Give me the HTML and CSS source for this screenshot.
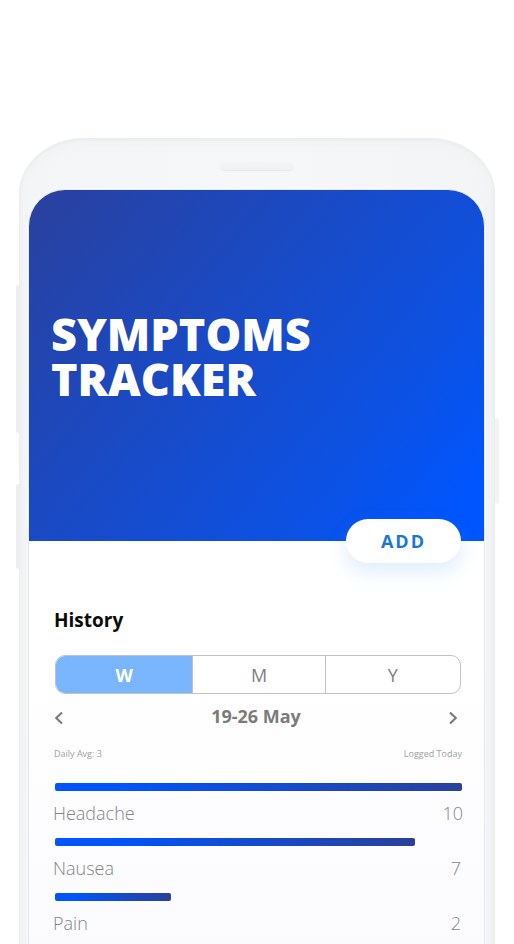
FILE: index.html
```html
<!DOCTYPE html>
<html lang="en">
<head>
<meta charset="utf-8">
<meta name="viewport" content="width=device-width, initial-scale=1">
<title>Symptoms Tracker</title>
<link rel="stylesheet" href="styles.css">
</head>
<body>
<div class="phone">
  <span class="side-key side-key-volume"></span>
  <span class="side-key side-key-assist"></span>
  <span class="side-key side-key-power"></span>
  <div class="bezel"><span class="speaker"></span></div>
  <main class="screen">
    <header class="hero">
      <h1 class="title">SYMPTOMS<br>TRACKER</h1>
      <button class="add" type="button">ADD</button>
    </header>
    <section class="history">
      <h2 class="heading">History</h2>
      <div class="segments">
        <button class="segment segment-active" type="button" aria-pressed="true">W</button>
        <button class="segment" type="button" aria-pressed="false">M</button>
        <button class="segment" type="button" aria-pressed="false">Y</button>
      </div>
      <div class="period">
        <button class="arrow" type="button" aria-label="Previous week">
          <svg width="10" height="14" viewBox="0 0 10 14"><path d="M8 1.5 2.2 7 8 12.5"/></svg>
        </button>
        <span class="range">19-26 May</span>
        <button class="arrow" type="button" aria-label="Next week">
          <svg width="10" height="14" viewBox="0 0 10 14"><path d="M2 1.5 7.8 7 2 12.5"/></svg>
        </button>
      </div>
      <div class="summary"><span>Daily Avg: 3</span><span>Logged Today</span></div>
      <ul class="symptoms">
        <li class="symptom">
          <div class="track"><div class="bar" style="width:100%"></div></div>
          <div class="row"><span>Headache</span><span>10</span></div>
        </li>
        <li class="symptom">
          <div class="track"><div class="bar" style="width:88.5%"></div></div>
          <div class="row"><span>Nausea</span><span class="digit">7</span></div>
        </li>
        <li class="symptom">
          <div class="track"><div class="bar" style="width:28.5%"></div></div>
          <div class="row"><span>Pain</span><span class="digit">2</span></div>
        </li>
      </ul>
    </section>
  </main>
</div>
</body>
</html>
```
FILE: styles.css
```css
* {
  box-sizing: border-box;
}

body {
  margin: 0;
  min-height: 100vh;
  padding: 138px 19px 0;
  display: flex;
  background: #fff;
  font-family: "Open Sans", sans-serif;
}

button {
  margin: 0;
  padding: 0;
  border: 0;
  background: none;
  font: inherit;
  color: inherit;
}

.phone {
  position: relative;
  flex: 1;
  display: flex;
  flex-direction: column;
  padding: 0 11px 0 10px;
  border-radius: 66px 66px 0 0 / 56px 56px 0 0;
  background: linear-gradient(90deg, #ebedee, #f3f5f7 4px, #f5f7f9 50%, #f2f4f6 calc(100% - 4px), #ebecee);
  box-shadow: inset 0 2px 3px #ebecec, inset 0 5px 12px #f0f1f2;
}

.side-key {
  position: absolute;
  width: 3px;
  background: #eceeef;
}

.side-key-volume {
  left: -3px;
  top: 147px;
  height: 148px;
  border-radius: 2px 0 0 2px;
}

.side-key-assist {
  left: -3px;
  top: 346px;
  height: 85px;
  border-radius: 2px 0 0 2px;
}

.side-key-power {
  right: -3px;
  top: 280px;
  height: 85px;
  border-radius: 0 2px 2px 0;
  background: #f3f2f4;
  box-shadow: 1px 1px 2px #f0f0f0;
}

.bezel {
  display: flex;
  justify-content: center;
  height: 52px;
  padding-top: 24px;
}

.speaker {
  width: 72px;
  height: 8px;
  border-radius: 4px;
  background: linear-gradient(#f2f4f6, #eff1f2);
  box-shadow: 0 1px 1px #e6e8e9;
}

.screen {
  flex: 1;
  border-radius: 36px 36px 0 0;
  background: linear-gradient(#fff 60%, #fbfbfe);
  box-shadow: 0 0 0 1px #e1e7ec, 0 0 0 2px #f8fafc;
}

.hero {
  position: relative;
  display: flex;
  align-items: center;
  height: 351px;
  padding: 0 22px 20px;
  border-radius: 36px 36px 0 0;
  background: linear-gradient(130deg, #2941a0 3%, #0d51e2 72%, #0055ff 94%);
}

.title {
  margin: 0;
  color: #fff;
  font-size: 45px;
  font-weight: 800;
  line-height: 45px;
}

.add {
  position: absolute;
  right: 23px;
  bottom: -22px;
  width: 115px;
  height: 44px;
  border-radius: 22px;
  background: #fff;
  box-shadow: 0 8px 20px rgba(60, 150, 240, 0.18);
  color: #1b78d0;
  font-size: 18px;
  font-weight: 700;
  letter-spacing: 2px;
}

.history {
  padding: 66px 21px 8px 24px;
}

.heading {
  margin: 0 1px;
  color: #0b0b0b;
  font-size: 19px;
  font-weight: 700;
  line-height: 26px;
}

.segments {
  display: grid;
  grid-template-columns: 137fr 133fr 136fr;
  height: 39px;
  margin: 22px 2px 0;
  overflow: hidden;
  border: 1px solid #c2c2c2;
  border-radius: 10px;
  color: #808080;
  font-size: 18px;
}

.segment + .segment {
  border-left: 1px solid #c2c2c2;
}

.segment-active {
  background: #7ab6fd;
  color: #fff;
  font-weight: 700;
}

.period {
  display: flex;
  align-items: center;
  justify-content: space-between;
  height: 46px;
  padding: 0 5px 0 1px;
}

.arrow {
  display: flex;
  padding-top: 2px;
}

.arrow svg {
  fill: none;
  stroke: #777;
  stroke-width: 2;
}

.range {
  padding-bottom: 2px;
  color: #7b7b7b;
  font-size: 18px;
  font-weight: 700;
  line-height: 24px;
}

.summary {
  display: flex;
  justify-content: space-between;
  margin-top: 7px;
  padding: 0 1px;
  color: #a0a0a0;
  font-size: 9px;
  line-height: 14px;
}

.symptoms {
  margin: 22px 0 0;
  padding: 0;
  list-style: none;
}

.symptom {
  height: 55px;
}

.track {
  padding: 0 1px 0 2px;
}

.bar {
  height: 8px;
  border-radius: 2px;
  background: linear-gradient(90deg, #0055fc 15%, #2a409c);
}

.row {
  display: flex;
  justify-content: space-between;
  padding-top: 10px;
  color: #858585;
  font-size: 18px;
  font-weight: 300;
  line-height: 24px;
}

.digit {
  padding-right: 2px;
}
```
